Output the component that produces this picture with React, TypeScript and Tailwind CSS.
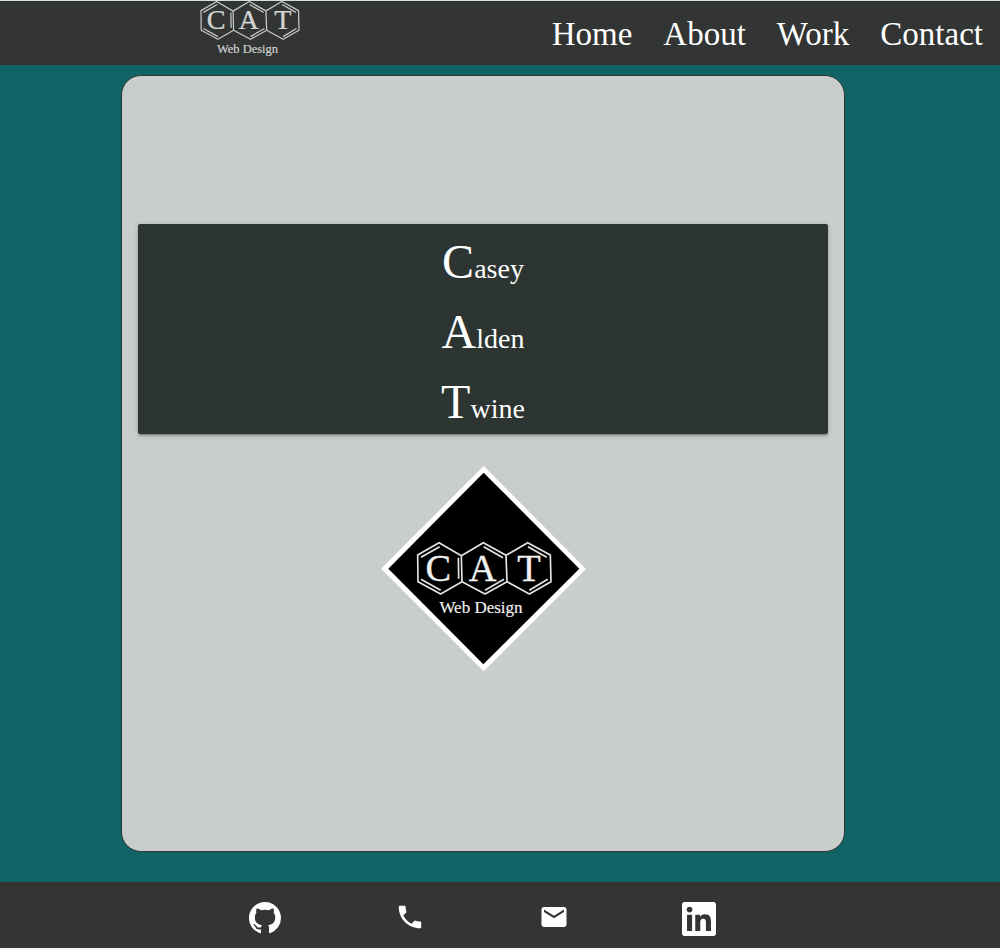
import { BsGithub } from "react-icons/bs";
import { MdEmail, MdPhone } from "react-icons/md";

const navLinks = ["Home", "About", "Work", "Contact"];
const names = ["Casey", "Alden", "Twine"];

function LogoMark() {
  return (
    <g>
      <g fill="none" stroke="#e4e4e4" strokeWidth="5" strokeLinejoin="round">
        <path d="M140 300 204 263 271 302 273 380 209 417 141 380Z" />
        <path d="M271 302 337 263 405 301 408 380 342 417 273 380" />
        <path d="M405 301 470 263 538 300 540 380 475 417 408 380" />
        <path d="M150 307 206 275M262 308 263 371M150 373 209 406" />
        <path d="M338 275 396 308M342 406 399 373" />
        <path d="M471 275 527 307M475 406 530 373" />
      </g>
      <g fill="#f0f0f0" stroke="#f0f0f0" fontFamily="'Liberation Serif', serif" textAnchor="middle">
        <g fontSize="115" strokeWidth="1">
          <text x="202" y="377">C</text>
          <text x="335" y="377">A</text>
          <text x="474" y="377">T</text>
        </g>
        <text x="330" y="473" fontSize="51" strokeWidth="0.5">
          Web Design
        </text>
      </g>
    </g>
  );
}

function LinkedInIcon() {
  return (
    <svg viewBox="0 0 24 24" className="size-[34px]" fill="currentColor" aria-hidden="true">
      <path d="M20.447 20.452h-3.554v-5.569c0-1.328-.027-3.037-1.852-3.037-1.853 0-2.136 1.445-2.136 2.939v5.667H9.351V9h3.414v1.561h.046c.477-.9 1.637-1.85 3.37-1.85 3.601 0 4.267 2.37 4.267 5.455v6.286zM5.337 7.433c-1.144 0-2.063-.926-2.063-2.065 0-1.138.92-2.063 2.063-2.063 1.14 0 2.064.925 2.064 2.063 0 1.139-.925 2.065-2.064 2.065zm1.782 13.019H3.555V9h3.564v11.452zM22.225 0H1.771C.792 0 0 .774 0 1.729v20.542C0 23.227.792 24 1.771 24h20.451C23.2 24 24 23.227 24 22.271V1.729C24 .774 23.2 0 22.222 0h.003z" />
    </svg>
  );
}

export default function App() {
  return (
    <div className="flex min-h-screen flex-col border-t border-b-2 border-t-[#d1e0df] border-b-[#f4f4f4] bg-[#116466] font-['Liberation_Serif',serif] text-white">
      <header className="flex h-16 items-start justify-between bg-[#323534] pr-[17px] pl-[20%]">
        <a href="#home" aria-label="CAT Web Design">
          <svg viewBox="136 261 408 232" className="h-[57px] w-[100px] opacity-85" aria-hidden="true">
            <LogoMark />
          </svg>
        </a>
        <nav className="flex h-full items-center gap-[31px] pt-1 text-[33px]">
          {navLinks.map((label) => (
            <a key={label} href={`#${label.toLowerCase()}`}>
              {label}
            </a>
          ))}
        </nav>
      </header>

      <main className="flex flex-1 flex-col items-center pt-2.5 pr-[34px] pb-[30px]">
        <section className="flex w-3/4 flex-1 flex-col justify-center rounded-[20px] border border-[#2c3531] bg-[#c9cdcc] px-4 pb-8">
          <h1 className="rounded-xs bg-[#2c3531] text-center text-[28px] shadow-[0_2px_2px_0_rgba(0,0,0,0.14),0_3px_1px_-2px_rgba(0,0,0,0.12),0_1px_5px_0_rgba(0,0,0,0.2)]">
            {names.map((name) => (
              <span key={name} className="block h-[70px] pt-1.5 leading-[64px]">
                <span className="text-5xl leading-[64px]">{name[0]}</span>
                {name.slice(1)}
              </span>
            ))}
          </h1>
          <svg viewBox="30 33 615 615" className="mt-8 size-[205px] self-center" role="img" aria-label="CAT Web Design">
            <path d="M338 33 645 342 338 649 30 341Z" fill="#fff" />
            <path d="M338 53 625 341 337 628 52 341Z" fill="#000" />
            <LogoMark />
          </svg>
        </section>
      </main>

      <footer className="flex h-[66px] justify-center bg-[#323534] pt-5 pr-9">
        <div className="grid w-3/5 grid-cols-4 items-start justify-items-center">
          <a href="#github" aria-label="GitHub">
            <BsGithub className="size-8" />
          </a>
          <a href="#phone" aria-label="Phone">
            <MdPhone className="size-[30px]" />
          </a>
          <a href="#email" aria-label="Email">
            <MdEmail className="size-[30px]" />
          </a>
          <a href="#linkedin" aria-label="LinkedIn">
            <LinkedInIcon />
          </a>
        </div>
      </footer>
    </div>
  );
}
